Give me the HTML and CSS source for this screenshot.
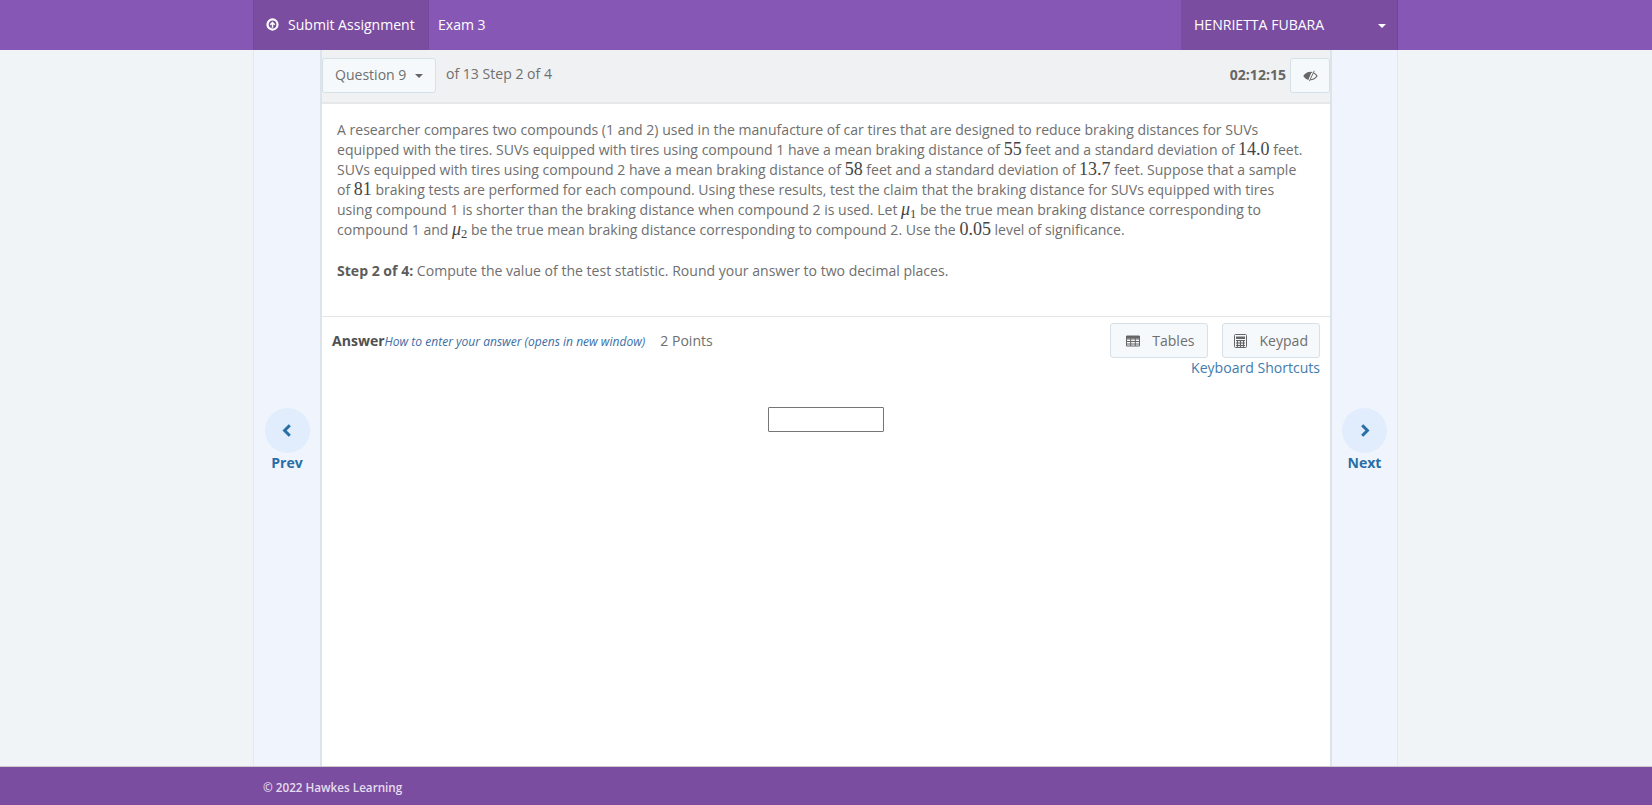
FILE: index.html
```html
<!DOCTYPE html>
<html lang="en">
<head>
<meta charset="utf-8">
<title>Exam 3</title>
<link rel="stylesheet" href="styles.css">
</head>
<body>
<header class="topbar">
  <div class="wrap topbar-inner">
    <a class="submit">
      <svg class="submit-icon" viewBox="0 0 14 14" width="13" height="13"><circle cx="7" cy="7" r="5.4" fill="none" stroke="#fff" stroke-width="2.4"/><path d="M7 10.500V5M4.600 7.200 7 4.800l2.400 2.400" fill="none" stroke="#fff" stroke-width="1.600"/></svg>
      Submit Assignment
    </a>
    <span class="exam">Exam 3</span>
    <div class="user"><span>HENRIETTA FUBARA</span><i class="caret caret-white"></i></div>
  </div>
</header>
<div class="wrap middle">
  <aside class="side">
    <a class="nav-circle"><svg viewBox="0 0 12 14" width="12" height="15"><path d="M8.800 1.800 3.600 7l5.200 5.200" fill="none" stroke="#2a6ea6" stroke-width="3"/></svg></a>
    <span class="nav-label">Prev</span>
  </aside>
  <main class="main">
    <div class="qbar">
      <button class="qbtn">Question 9 <i class="caret"></i></button>
      <span class="qcount">of 13 Step 2 of 4</span>
      <strong class="timer">02:12:15</strong>
      <button class="eye">
        <svg viewBox="0 0 16 12" width="15" height="12"><path d="M1 6c2-2.800 4.200-4 7-4s5 1.200 7 4c-2 2.800-4.200 4-7 4s-5-1.200-7-4Z" fill="none" stroke="#666" stroke-width="1.300"/><path d="M1 6c2-2.800 4.200-4 7-4l1 .2-3 7.300C4 9.200 2.400 8 1 6Z" fill="#666"/><path d="M11.500 .8 6 11.200" stroke="#f5f7f9" stroke-width="1.500"/><path d="M12 .5 6.800 11.500" stroke="#666" stroke-width="1"/></svg>
      </button>
    </div>
    <section class="question">
      <p>A researcher compares two compounds (1 and 2) used in the manufacture of car tires that are designed to reduce braking distances for SUVs<br>
      equipped with the tires. SUVs equipped with tires using compound 1 have a mean braking distance of <span class="m">55</span> feet and a standard deviation of <span class="m">14.0</span> feet.<br>
      SUVs equipped with tires using compound 2 have a mean braking distance of <span class="m">58</span> feet and a standard deviation of <span class="m">13.7</span> feet. Suppose that a sample<br>
      of <span class="m">81</span> braking tests are performed for each compound. Using these results, test the claim that the braking distance for SUVs equipped with tires<br>
      using compound 1 is shorter than the braking distance when compound 2 is used. Let <span class="m"><i>μ</i><sub>1</sub></span> be the true mean braking distance corresponding to<br>
      compound 1 and <span class="m"><i>μ</i><sub>2</sub></span> be the true mean braking distance corresponding to compound 2. Use the <span class="m">0.05</span> level of significance.</p>
      <p class="step"><strong>Step 2 of 4:</strong> Compute the value of the test statistic. Round your answer to two decimal places.</p>
    </section>
    <section class="answer">
      <div class="answer-left">
        <strong class="answer-title">Answer</strong><a class="howto">How to enter your answer (opens in new window)</a>
        <span class="points">2 Points</span>
      </div>
      <div class="answer-right">
        <div class="tools">
          <button class="tool tool-wide">
            <svg viewBox="0 0 14 12" width="14" height="12"><path d="M.5 1h13v10H.5zM.5 4h13M.5 6.500h13M.5 9h13M4.700 1v10M9.300 1v10" fill="none" stroke="#666" stroke-width="1"/><path d="M.5 1h13v2.500H.5z" fill="#666"/></svg>
            Tables
          </button>
          <button class="tool">
            <svg viewBox="0 0 13 14" width="13" height="14"><rect x=".5" y=".5" width="12" height="13" rx="1" fill="none" stroke="#666"/><path d="M2 2.500h9V5H2z" fill="#666"/><path d="M2 6.500h9M2 9h9M2 11.500h9M3.500 6v7M6.500 6v7M9.500 6v7" stroke="#666" stroke-width="1.200"/></svg>
            Keypad
          </button>
        </div>
        <a class="shortcuts">Keyboard Shortcuts</a>
      </div>
    </section>
    <div class="entry"><input class="entry-input" type="text" aria-label="Answer"></div>
  </main>
  <aside class="side side-right">
    <a class="nav-circle"><svg viewBox="0 0 12 14" width="12" height="15"><path d="M3.200 1.800 8.400 7l-5.200 5.200" fill="none" stroke="#2a6ea6" stroke-width="3"/></svg></a>
    <span class="nav-label">Next</span>
  </aside>
</div>
<footer class="footer"><div class="wrap footer-inner">© 2022 Hawkes Learning</div></footer>
</body>
</html>
```
FILE: styles.css
```css
* { box-sizing: border-box; }
html, body { height: 100%; }
body {
  margin: 0;
  height: 100vh;
  overflow: hidden;
  display: flex;
  flex-direction: column;
  background: #f0f4f7;
  color: #6f6f6f;
  font-family: "Open Sans", sans-serif;
  font-size: 14.060px;
}
.wrap { width: 1145px; margin-left: 253px; }
.topbar { height: 50px; background: #8757b5; flex: none; }
.topbar-inner { display: flex; height: 50px; align-items: stretch; color: #fff; }
.submit {
  width: 176px;
  background: #7b4da0;
  border-left: 1px solid #74489a;
  border-right: 1px solid #74489a;
  border-radius: 0 0 2px 2px;
  display: flex;
  align-items: center;
  padding-left: 12px;
  gap: 9px;
  padding-bottom: 1px;
}
.submit-icon { flex: none; }
.exam { margin-left: 9px; align-self: center; padding-bottom: 1px; }
.user {
  margin-left: auto;
  width: 217px;
  background: #7b4da0;
  border-right: 1px solid #6f4493;
  display: flex;
  align-items: center;
  justify-content: space-between;
  padding: 0 11px 1px 13px;
}
.caret {
  display: inline-block;
  border-left: 4px solid transparent;
  border-right: 4px solid transparent;
  border-top: 4px solid #666;
  vertical-align: 2px;
  margin-left: 5px;
}
.caret-white { border-top-color: #fff; margin-top: 3px; }
.middle { flex: 1; display: flex; min-height: 0; border-left: 1px solid #e4e9ef; border-right: 1px solid #e4e9ef; }
.side {
  width: 66px;
  flex: none;
  background: #f0f5fd;
  display: flex;
  flex-direction: column;
  align-items: center;
  padding-top: 358px;
}
.side-right { width: 65px; }
.nav-circle {
  width: 45px;
  height: 45px;
  border-radius: 50%;
  background: #e1edfc;
  display: flex;
  align-items: center;
  justify-content: center;
}
.nav-label { color: #2a6ea6; font-weight: 700; line-height: 19px; }
.main {
  flex: 1;
  min-width: 0;
  background: #fff;
  border-left: 2px solid #dde3ea;
  border-right: 2px solid #dde3ea;
  display: flex;
  flex-direction: column;
}
.qbar {
  height: 54px;
  flex: none;
  background: #eff1f3;
  border-bottom: 2px solid #e5e7e9;
  display: flex;
  align-items: flex-start;
  padding-top: 8px;
}
.qbtn {
  width: 114px;
  height: 35px;
  background: #f6f9fb;
  border: 1px solid #d6e0e7;
  border-radius: 3px;
  font: inherit;
  color: #6f6f6f;
  padding: 0 0 2px;
}
.qcount { margin-left: 10px; line-height: 32px; }
.timer { margin-left: auto; margin-right: 4px; line-height: 33px; color: #666; }
.eye {
  width: 40px;
  height: 35px;
  background: #f6f9fb;
  border: 1px solid #d6e0e7;
  border-radius: 3px;
  padding: 0;
  display: flex;
  align-items: center;
  justify-content: center;
}
.question { height: 213px; flex: none; padding: 16px 16px 0 15px; border-bottom: 1px solid #e3e6e9; }
.question p { margin: 0; line-height: 20px; white-space: nowrap; }
.question .step { margin-top: 21px; }
.question strong { color: #5c5c5c; }
.m { font-family: "Liberation Serif", serif; font-size: 18px; color: #444; line-height: 1; }
.m sub { font-size: 12.500px; line-height: 0; vertical-align: -3px; }
.answer { display: flex; justify-content: space-between; padding: 6px 10px 0; flex: none; }
.answer-left { display: flex; align-items: baseline; padding-top: 8px; height: 34px; }
.answer-title { color: #505050; }
.howto { color: #3b6ea5; font-style: italic; font-size: 12.050px; }
.points { margin-left: 15px; }
.answer-right { display: flex; flex-direction: column; align-items: flex-end; }
.tools { display: flex; gap: 14px; }
.tool {
  height: 35px;
  background: #f6f9fb;
  border: 1px solid #d6e0e7;
  border-radius: 3px;
  font: inherit;
  color: #6f6f6f;
  display: flex;
  align-items: center;
  gap: 12px;
  padding: 0 11px;
}
.tool-wide { padding: 0 13px 0 15px; }
.shortcuts { color: #3f7cad; line-height: 20px; }
.entry { display: flex; justify-content: center; margin-top: 29px; }
.entry-input { width: 116px; height: 25px; border: 1px solid #767676; border-radius: 1px; background: #fff; padding: 0; }
.footer {
  height: 39px;
  flex: none;
  background: #7b4da0;
  border-top: 1px solid #ccc;
  color: #e6dcef;
  font-size: 11.700px;
  font-weight: 600;
}
.footer-inner { padding-left: 10px; line-height: 41px; }
```
